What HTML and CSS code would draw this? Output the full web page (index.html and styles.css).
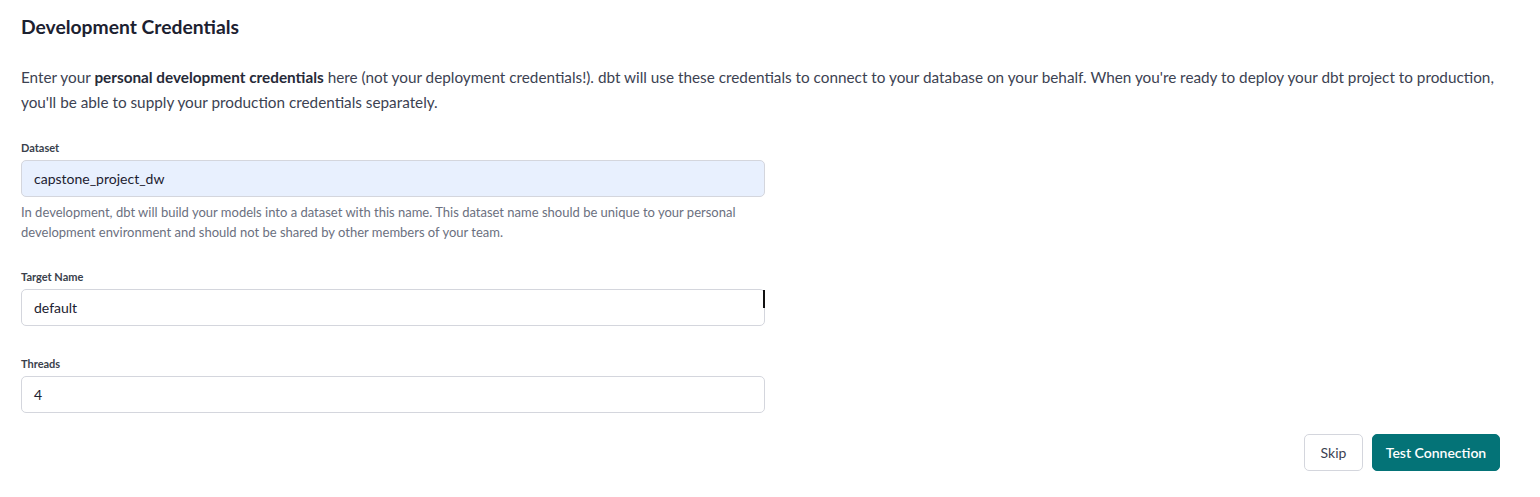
FILE: index.html
```html
<!DOCTYPE html>
<html>
<head>
<meta charset="utf-8">
<link rel="stylesheet" href="styles.css">
</head>
<body>
<div class="page">
  <h2 class="title">Development Credentials</h2>
  <p class="intro">Enter your <strong>personal development credentials</strong> here (not your deployment credentials!). dbt will use these credentials to connect to your database on your behalf. When you're ready to deploy your dbt project to production, you'll be able to supply your production credentials separately.</p>
  <div class="form">
    <div class="field">
      <label class="label">Dataset</label>
      <div class="input autofill">capstone_project_dw</div>
      <p class="help">In development, dbt will build your models into a dataset with this name. This dataset name should be unique to your personal development environment and should not be shared by other members of your team.</p>
    </div>
    <div class="field">
      <label class="label">Target Name</label>
      <div class="input">default<span class="caret"></span></div>
    </div>
    <div class="field">
      <label class="label">Threads</label>
      <div class="input">4</div>
    </div>
  </div>
  <div class="actions">
    <button class="btn secondary">Skip</button>
    <button class="btn primary">Test Connection</button>
  </div>
</div>
</body>
</html>
```
FILE: styles.css
```css
* { box-sizing: border-box; }
html, body { margin: 0; padding: 0; background: #fff; }
body { font-family: "Lato", "Noto Sans", sans-serif; color: #262a38; }
.page { padding: 14px 40px 0 21px; }
.title { margin: 0; font-size: 19.3px; font-weight: 700; line-height: 26px; color: #1c2130; }
.intro { margin: 25px 0 0; font-size: 15.3px; line-height: 25px; color: #3c4252; }
.intro strong { color: #262a38; font-weight: 700; }
.form { width: 744px; margin-top: 26px; display: flex; flex-direction: column; gap: 31px; }
.field { display: flex; flex-direction: column; }
.label { font-size: 11px; font-weight: 700; line-height: 14px; color: #3a3f4c; margin-bottom: 5px; }
.input { position: relative; height: 37px; border: 1px solid #d4d6dd; border-radius: 5px; padding: 0 12px; font-size: 14px; line-height: 35px; color: #1c2130; background: #fff; }
.input.autofill { background: #e8f0fe; }
.caret { position: absolute; right: -1px; top: 0; width: 2px; height: 18px; background: #111; }
.help { margin: 5px 0 -3px; font-size: 13px; line-height: 20px; color: #6b7080; }
.actions { display: flex; justify-content: flex-end; gap: 9px; margin-top: 21px; }
.btn { height: 37px; border-radius: 5px; font-family: inherit; font-size: 14px; padding: 0 16px; cursor: pointer; }
.btn.secondary { background: #fff; border: 1px solid #d4d6dd; color: #3c4252; width: 59px; padding: 0; }
.btn.primary { background: #047377; border: 1px solid #047377; color: #fff; font-weight: 600; width: 128px; padding: 0; }
```
